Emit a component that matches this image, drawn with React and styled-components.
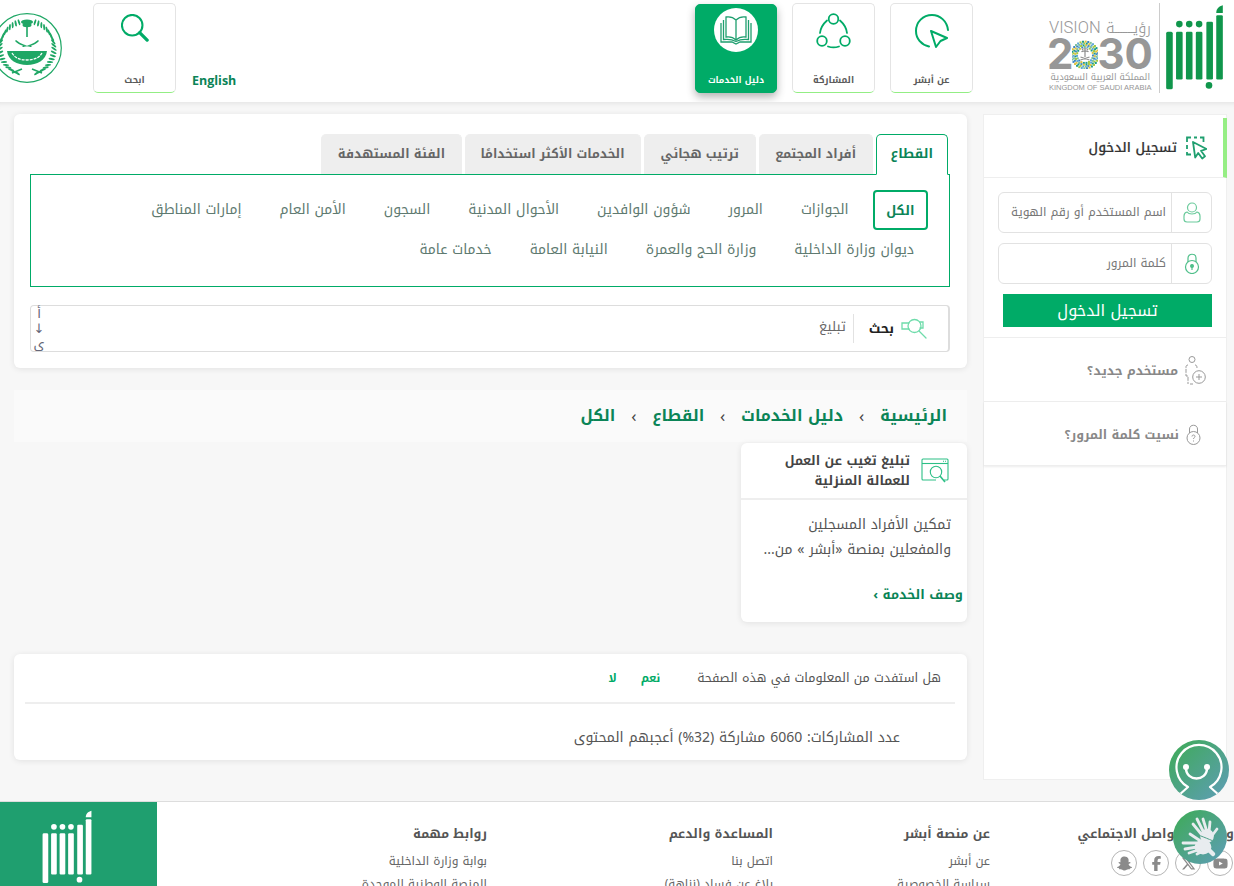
import React from "react";
import styled, { createGlobalStyle } from "styled-components";
import { FaFacebookF, FaXTwitter, FaYoutube } from "react-icons/fa6";
import { FaSnapchatGhost } from "react-icons/fa";

const GREEN = "#00ab67";
const TEXT_GREEN = "#0b8457";
const KUFI = `"Noto Kufi Arabic", "DejaVu Sans", sans-serif`;

const GlobalStyle = createGlobalStyle`
  html, body {
    margin: 0;
    height: 100%;
    overflow: hidden;
    background: #fff;
    font-family: ${KUFI};
  }
  * { box-sizing: border-box; }
`;

const Page = styled.div`
  width: 1234px;
  height: 886px;
  overflow: hidden;
  position: relative;
  color: #444;
`;

/* header */
const Header = styled.header`
  height: 102px;
  display: flex;
  align-items: flex-start;
  padding-right: 10px;
  background: #fff;
  overflow: hidden;
`;

const LogoBox = styled.div`
  display: flex;
  align-items: flex-start;
  margin-left: 73px;
`;

const MainLogo = styled.svg`
  width: 59px;
  height: 85px;
  margin-top: 5px;
  display: block;
`;

const LogoDivider = styled.div`
  width: 1px;
  height: 90px;
  margin: 3px 5px 0 5px;
  background: #ccc;
`;

const Vision = styled.div`
  width: 108px;
  padding-top: 18px;
  direction: ltr;
  color: #979797;
`;

const VisionTop = styled.div`
  display: flex;
  justify-content: space-between;
  align-items: center;
  height: 20px;
  font: 300 16.5px/20px Roboto, sans-serif;
  padding: 0 3px 0 3px;
`;

const VisionArabic = styled.span`
  font: 300 15px/20px ${KUFI};
`;

const VisionYear = styled.div`
  display: flex;
  align-items: center;
  height: 31px;
  padding-left: 1px;
  font: 700 42px/31px Inter, sans-serif;
`;

const VisionCaption = styled.div`
  margin-top: 3px;
  font: 9px/11px ${KUFI};
  white-space: nowrap;
  text-align: right;
  padding: 0 4px 0 2px;
`;

const VisionLatin = styled.div`
  font: 7.5px/9px "Liberation Sans", sans-serif;
  white-space: nowrap;
  padding-left: 3px;
`;

const NavCards = styled.nav`
  display: flex;
  gap: 15px;
  padding-top: 3px;
`;

const NavCard = styled.div`
  width: ${(p) => (p.$active ? "82px" : "83px")};
  height: ${(p) => (p.$active ? "89px" : "90px")};
  margin-top: ${(p) => (p.$active ? "1px" : "0")};
  display: flex;
  flex-direction: column;
  align-items: center;
  border: 1px solid ${(p) => (p.$active ? GREEN : "#e4e4e4")};
  border-bottom-color: ${(p) => (p.$active ? GREEN : "#93ee84")};
  border-radius: 5px;
  background: ${(p) => (p.$active ? GREEN : "#fff")};
  box-shadow: ${(p) => (p.$active ? "0 4px 8px rgba(0,0,0,.3)" : "none")};
  color: ${(p) => (p.$active ? "#fff" : "#5a5a5a")};
`;

const NavIconWrap = styled.div`
  height: 61px;
  display: flex;
  align-items: flex-start;
  justify-content: center;
  padding-top: ${(p) => (p.$active ? "3px" : "10px")};
`;

const BookCircle = styled.div`
  width: 44px;
  height: 44px;
  border-radius: 50%;
  background: #fff;
  display: flex;
  align-items: center;
  justify-content: center;
`;

const NavLabel = styled.div`
  font-size: ${(p) => (p.$small ? "8.8px" : "9.2px")};
  font-weight: 700;
  line-height: 24px;
  padding-top: 3px;
  white-space: nowrap;
`;

const LeftTools = styled.div`
  margin-right: auto;
  display: flex;
  align-items: flex-start;
`;

const English = styled.a`
  font: 700 12.5px/16px "Open Sans", sans-serif;
  color: ${TEXT_GREEN};
  margin: 73px 0 0 16px;
`;

const SearchCard = styled(NavCard)`
  margin-top: 3px;
  margin-left: 31px;
`;

const Emblem = styled.svg`
  width: 70px;
  height: 70px;
  margin: 13px 0 0 -8px;
  flex-shrink: 0;
`;

/* body */
const Main = styled.main`
  height: 700px;
  display: flex;
  gap: 16px;
  padding: 12px 7px 21px 14px;
  background: #f7f7f7;
  box-shadow: inset 0 6px 6px -6px rgba(0, 0, 0, 0.12);
  border-bottom: 1px solid #ddd;
`;

const Sidebar = styled.aside`
  width: 244px;
  flex-shrink: 0;
  background: #fff;
  border: 1px solid #efefef;
  display: flex;
  flex-direction: column;
`;

const LoginHead = styled.div`
  height: 60px;
  display: flex;
  align-items: center;
  gap: 9px;
  padding: 0 16px 0 0;
  border-bottom: 1px solid #eee;
  border-right: 4px solid #96ee84;
  margin-top: 3px;
  margin-right: -1px;
`;

const LoginTitle = styled.div`
  font-size: 13.5px;
  font-weight: 500;
  line-height: 24px;
  color: #333;
  -webkit-text-stroke: 0.2px #333;
`;

const LoginForm = styled.div`
  display: flex;
  flex-direction: column;
  gap: 10px;
  padding: 14px 14px 10px 14px;
  border-bottom: 1px solid #eee;
`;

const Field = styled.div`
  height: 41px;
  display: flex;
  border: 1px solid #e2e2e2;
  border-radius: 6px;
  background: #fff;
`;

const FieldIcon = styled.div`
  width: 40px;
  display: flex;
  align-items: center;
  justify-content: center;
  border-left: 1px solid #e2e2e2;
`;

const FieldText = styled.div`
  flex: 1;
  padding-right: 5px;
  font-size: 12px;
  line-height: 39px;
  color: #777;
  white-space: nowrap;
`;

const LoginButton = styled.div`
  height: 33px;
  margin-left: 5px;
  background: ${GREEN};
  color: #fff;
  font-size: 16px;
  line-height: 33px;
  text-align: center;
`;

const SideLink = styled.div`
  height: 64px;
  display: flex;
  align-items: center;
  gap: 7px;
  padding-right: ${(p) => p.$pad}px;
  padding-top: 2px;
  border-bottom: 1px solid #eee;
  box-shadow: ${(p) => (p.$last ? "0 1px 2px rgba(0,0,0,.08)" : "none")};
  font-size: 12.5px;
  font-weight: 700;
  line-height: 24px;
  color: #888;
`;

const Content = styled.div`
  flex: 1;
  min-width: 0;
  display: flex;
  flex-direction: column;
`;

const Card = styled.section`
  background: #fff;
  border-radius: 6px;
  box-shadow: 0 1px 6px rgba(0, 0, 0, 0.09);
`;

const FilterCard = styled(Card)`
  height: 254px;
  padding: 20px 17px 0 16px;
`;

const Tabs = styled.div`
  display: flex;
  gap: 3px;
  height: 40px;
  padding-right: 2px;
`;

const Tab = styled.div`
  padding: 0 ${(p) => p.$pad}px;
  line-height: 38px;
  font-size: ${(p) => (p.$active ? "13px" : "12.5px")};
  font-weight: 700;
  white-space: nowrap;
  border: 1px solid ${(p) => (p.$active ? GREEN : "#eee")};
  border-bottom: ${(p) => (p.$active ? "1px solid #fff" : "none")};
  border-radius: 5px 5px 0 0;
  background: ${(p) => (p.$active ? "#fff" : "#eee")};
  color: ${(p) => (p.$active ? TEXT_GREEN : "#666")};
  position: relative;
  z-index: 1;
  margin-bottom: ${(p) => (p.$active ? "-1px" : "0")};
  height: ${(p) => (p.$active ? "41px" : "40px")};
`;

const TabPanel = styled.div`
  height: 113px;
  border: 1px solid ${GREEN};
  padding: 15px 21px 0 0;
`;

const FilterRow = styled.div`
  display: flex;
  gap: 10px;
  height: 40px;
`;

const Filter = styled.div`
  height: 40px;
  padding: 0 ${(p) => (p.$active ? "11.5px" : "14px")};
  line-height: ${(p) => (p.$active ? "37px" : "40px")};
  font-size: ${(p) => (p.$active ? "13px" : "14px")};
  white-space: nowrap;
  border-radius: 4px;
  color: ${(p) => (p.$active ? TEXT_GREEN : "#5e7a70")};
  font-weight: ${(p) => (p.$active ? 700 : 400)};
  border: ${(p) => (p.$active ? `2px solid ${GREEN}` : "0")};
`;

const SearchBar = styled.div`
  height: 47px;
  margin-top: 18px;
  display: flex;
  align-items: center;
  padding: 0 20px 0 0;
  border: 1px solid #ddd;
  border-right: 2px solid #ddd;
  border-radius: 4px;
`;

const SearchLabel = styled.div`
  font-size: 13.5px;
  font-weight: 700;
  color: #222;
  margin-right: 7px;
  padding-left: 15px;
  border-left: 1px solid #e2e2e2;
  line-height: 28px;
  padding-top: 1px;
`;

const SearchValue = styled.div`
  font-size: 13px;
  line-height: 24px;
  color: #666;
  margin-right: 7px;
  margin-top: -4px;
`;

const SortArrows = styled.div`
  margin-right: auto;
  width: 12px;
  margin-left: 2px;
  height: 45px;
  display: flex;
  flex-direction: column;
  justify-content: space-between;
  align-items: center;
  font-size: 13px;
  line-height: 15px;
  color: #667;
`;

const Breadcrumb = styled.div`
  height: 52px;
  margin-top: 22px;
  display: flex;
  align-items: center;
  padding: 0 20px 0 0;
  gap: 15.7px;
  background: #fafafa;
  font-size: 16px;
  font-weight: 700;
  line-height: 30px;
  color: ${TEXT_GREEN};
`;

const Crumb = styled.span`
  white-space: nowrap;
`;

const CrumbSep = styled.span`
  font-size: 17px;
  font-weight: 400;
  color: #444;
`;

const ServiceCard = styled(Card)`
  width: 226px;
  height: 179px;
  margin-top: 1px;
`;

const ServiceHead = styled.div`
  height: 57px;
  display: flex;
  align-items: center;
  gap: 11px;
  padding-right: 18px;
  border-bottom: 2px solid #eee;
`;

const ServiceTitle = styled.div`
  width: 140px;
  font-size: 12.8px;
  font-weight: 700;
  line-height: 20px;
  color: #444;
`;

const ServiceBody = styled.div`
  padding: 12px 16px 0 0;
  font-size: 14px;
  line-height: 25px;
  color: #555;
  white-space: nowrap;
`;

const ServiceLink = styled.div`
  margin: 23px 4px 0 0;
  font-size: 13px;
  font-weight: 700;
  line-height: 20px;
  color: ${TEXT_GREEN};
`;

const FeedbackCard = styled(Card)`
  height: 106px;
  margin-top: 32px;
  padding: 0 12px 0 11px;
`;

const FeedbackRow = styled.div`
  height: 50px;
  display: flex;
  align-items: center;
  padding-bottom: 1px;
  padding-right: 14px;
  border-bottom: 2px solid #eee;
  font-size: 12.6px;
  line-height: 24px;
  color: #555;
`;

const Answer = styled.span`
  font-size: 11.5px;
  font-weight: 700;
  color: ${GREEN};
  margin-right: ${(p) => p.$gap}px;
`;

const Stats = styled.div`
  padding: 25px 55px 0 0;
  font-size: 14px;
  line-height: 18px;
  color: #555;
`;

/* footer */
const Footer = styled.footer`
  height: 84px;
  display: flex;
  flex-direction: row-reverse;
  background: #fff;
  overflow: hidden;
`;

const FooterBrand = styled.div`
  width: 157px;
  height: 100%;
  background: #1f9f6f;
  padding: 7px 0 0 42px;
  flex-shrink: 0;
  direction: ltr;
`;

const FooterLogo = styled.svg`
  width: 50px;
  height: 76px;
  display: block;
`;

const FooterCols = styled.div`
  flex: 1;
  display: flex;
  padding-top: 22px;
`;

const FooterCol = styled.div`
  width: ${(p) => p.$width}px;
  flex-shrink: 0;
  white-space: nowrap;
`;

const FooterTitle = styled.div`
  font-size: 12.6px;
  font-weight: 700;
  line-height: 20px;
  color: #555;
  margin-bottom: 6px;
`;

const FooterLink = styled.div`
  font-size: 12px;
  line-height: 23px;
  color: #666;
`;

const Socials = styled.div`
  display: flex;
  gap: 6px;
  margin: 5px 1px 0 0;
`;

const SocialDot = styled.div`
  width: 26px;
  height: 26px;
  border: 1px solid #b5b5b5;
  border-radius: 50%;
  display: flex;
  align-items: center;
  justify-content: center;
  color: #8a8a8a;
  font-size: 15px;
`;

const FloatBtn = styled.div`
  position: absolute;
  left: ${(p) => p.$x}px;
  top: ${(p) => p.$y}px;
  width: ${(p) => p.$size}px;
  height: ${(p) => p.$size}px;
  border-radius: 50%;
  background: linear-gradient(135deg, #3dab55, #5f9db8);
  overflow: hidden;
`;

const RingSvg = styled.svg`
  flex-shrink: 0;
  margin: 0 -1px;
`;

const ShareSvg = styled.svg`
  margin-top: -1px;
`;

function AbsherMark({ as: Comp, color }) {
  return (
    <Comp viewBox="46 14 176 258" fill={color}>
      <rect x="48" y="95" width="20" height="175" rx="5" />
      <rect x="78" y="95" width="20" height="145" rx="4" />
      <rect x="108" y="95" width="20" height="145" rx="4" />
      <rect x="138" y="95" width="20" height="145" rx="4" />
      <rect x="170" y="65" width="20" height="175" rx="4" />
      <rect x="200" y="45" width="20" height="195" rx="4" />
      <path d="M200 38c0-12 8-20 20-23v23z" />
      <circle cx="88" cy="72" r="10" />
      <circle cx="118" cy="72" r="10" />
      <circle cx="148" cy="72" r="10" />
      <circle cx="178" cy="258" r="10" />
    </Comp>
  );
}

function VisionRing() {
  const colors = ["#5fa9d6", "#a4c93f", "#1f9d8a", "#e2c23c", "#3f86c0", "#7cc09a"];
  const dots = [];
  for (let r = 8; r <= 13.5; r += 1.8) {
    const n = Math.round(r * 2.4);
    for (let i = 0; i < n; i++) {
      const a = (i / n) * Math.PI * 2 + r;
      dots.push(
        <rect
          key={r + "-" + i}
          x={12 + r * Math.cos(a)}
          y={15 + r * Math.sin(a)}
          width="2"
          height="2"
          fill={colors[(i + Math.round(r)) % 6]}
        />
      );
    }
  }
  return (
    <RingSvg width="26" height="30" viewBox="0 0 26 30">
      {dots}
      <path d="M13 9v9M10 11c1-2 5-2 6 0M9.500 13c1-1.500 6-1.500 7 0M8.500 21l9-3M17.500 21l-9-3" stroke="#8e8e8e" strokeWidth="1.200" fill="none" />
    </RingSvg>
  );
}

function AboutIcon() {
  return (
    <svg width="34" height="34" viewBox="0 0 34 34" fill="none" stroke={GREEN} strokeWidth="2">
      <path d="M14 32.500C6 30.500 1 24.500 1 17 1 8 8 1 17 1c8 0 15 6 16 15" strokeLinecap="round" />
      <path d="M16 17l16 7-6.500 3-4.500 6z" strokeLinejoin="round" />
    </svg>
  );
}

function ShareIcon() {
  return (
    <ShareSvg width="35" height="36" viewBox="0 0 35 36" fill="none" stroke={GREEN} strokeWidth="1.800">
      <circle cx="17.500" cy="6" r="4.800" />
      <circle cx="6" cy="28" r="4.800" />
      <circle cx="29" cy="28" r="4.800" />
      <path d="M11 7.500C7 11 4.500 15.500 4 20M24 7.500c4 3.500 6.500 8 7 12.500M12 33.500c3.500 1.200 7.500 1.200 11 0" strokeLinecap="round" />
    </ShareSvg>
  );
}

function BookIcon() {
  return (
    <svg width="32" height="30" viewBox="0 0 32 30" fill="none" stroke="#1f9f6f" strokeWidth="1.300">
      <path d="M16 5C13 2 9 1.500 6 2v20c3-.5 7 0 10 3 3-3 7-3.500 10-3V2c-3-.5-7 0-10 3zM16 5v20" />
      <path d="M3.500 5v19.500c4-.5 9 0 12.500 2 3.500-2 8.500-2.500 12.500-2V5M1 8v19h11l4 2 4-2h11V8" />
    </svg>
  );
}

function SearchGlass() {
  return (
    <svg width="28" height="28" viewBox="0 0 30 30" fill="none" stroke={GREEN}>
      <circle cx="12" cy="12" r="11" strokeWidth="2.200" />
      <path d="M20 20l8 8" strokeWidth="3.500" strokeLinecap="round" />
    </svg>
  );
}

function LoginCursor() {
  return (
    <svg width="21" height="24" viewBox="0 0 21 24" fill="none" stroke="#1f9f6f" strokeWidth="1.800">
      <path d="M1 6V1.500h4M8 1.500h3M14 1.500h3.500V6M1 9v4M1 16v2.500h4" />
      <path d="M7 6l13.500 7-5.500 1.800 4 5.500-2.800 2.200-4-5.500-3 4.500z" strokeLinejoin="round" fill="#fff" />
    </svg>
  );
}

function UserIcon() {
  return (
    <svg width="18" height="21" viewBox="0 0 18 21" fill="none" stroke="#6dcb9d" strokeWidth="1.200">
      <circle cx="9" cy="5.500" r="4.500" />
      <path d="M4 10c-2 .5-3 2-3 4v3c0 2 1 3 3 3h10c2 0 3-1 3-3v-3c0-2-1-3.500-3-4-1 1.500-3 2-5 2s-4-.5-5-2z" />
    </svg>
  );
}

function LockIcon() {
  return (
    <svg width="16" height="21" viewBox="0 0 16 21" fill="none" stroke="#4fbf8a" strokeWidth="1.200">
      <path d="M4 9V5c0-5 8-5 8 0v4" />
      <circle cx="8" cy="14" r="6.500" />
      <circle cx="8" cy="13" r="1.400" fill="#4fbf8a" />
      <path d="M8 14v3" />
    </svg>
  );
}

function NewUserIcon() {
  return (
    <svg width="21" height="30" viewBox="0 0 21 30" fill="none" stroke="#999" strokeWidth="1">
      <circle cx="7" cy="3.500" r="3" />
      <path d="M3 9c-1.500 0-2 1-2 2v9h2v8M8 28H5M10 9c1.500 0 2 1 2 3" strokeDasharray="4 1" />
      <circle cx="14" cy="21" r="6.300" />
      <path d="M14 18v6M11 21h6" />
    </svg>
  );
}

function ForgotIcon() {
  return (
    <svg width="15" height="21" viewBox="0 0 15 21" fill="none" stroke="#999" strokeWidth="1">
      <path d="M3.500 9V5c0-5 8-5 8 0v4" />
      <circle cx="7.500" cy="14" r="6.500" />
      <path d="M6 12.500c0-2 3-2 3 0 0 1-1.500 1-1.500 2.500M7.500 16.500v1" />
    </svg>
  );
}

function KeySearchIcon() {
  return (
    <svg width="27" height="21" viewBox="0 0 27 21" fill="none" stroke="#6fdcab" strokeWidth="1.300">
      <circle cx="13.500" cy="8" r="6.500" />
      <path d="M18 13l7 7M8 5H1v6h7M19 4h3v6h-3" strokeLinecap="round" />
    </svg>
  );
}

function ServiceIcon() {
  return (
    <svg width="28" height="26" viewBox="0 0 28 26" fill="none" stroke="#2cbf86" strokeWidth="1.100">
      <path d="M23 22h3c1 0 1-.5 1-1V2c0-.5-.5-1-1-1H2c-.5 0-1 .5-1 1v19c0 .5.5 1 1 1h13" />
      <path d="M1 5.500h26" />
      <circle cx="15" cy="14" r="5.700" />
      <path d="M19 18l5 6" strokeWidth="1.600" />
      <path d="M22 3.300h1M24 3.300h1" />
    </svg>
  );
}

function EmblemArt() {
  const leaves = [];
  for (let i = 0; i < 20; i++) {
    const a = (i / 20) * 2.6 + 0.3;
    const x1 = 35 - 27 * Math.sin(a);
    const y1 = 35 - 27 * Math.cos(a);
    const deg = (a * 180) / Math.PI - 35;
    leaves.push(<ellipse key={"l" + i} cx={x1} cy={y1} rx="1" ry="3.200" transform={`rotate(${deg} ${x1} ${y1})`} />);
    const x2 = 70 - x1;
    leaves.push(<ellipse key={"r" + i} cx={x2} cy={y1} rx="1" ry="3.200" transform={`rotate(${-deg} ${x2} ${y1})`} />);
  }
  return (
    <Emblem viewBox="0 0 70 70">
      <circle cx="35" cy="35" r="34.300" fill="none" stroke="#1fa765" strokeWidth="1.200" />
      <g fill="#1fa765">
        {leaves}
        <rect x="34.200" y="10" width="1.600" height="14" />
        <ellipse cx="35" cy="9" rx="6" ry="2.600" />
        <ellipse cx="35" cy="12" rx="4.500" ry="2.200" />
        <path d="M24 27c5 4 10 6 16 6l-1 1c-6 0-12-2-16-6zM46 27c-5 4-10 6-16 6l1 1c6 0 12-2 16-6z" />
        <path d="M15 38h40c-1 9-10 14-20 14s-19-5-20-14z" />
      </g>
      <path d="M20 40c3 5 8 7 15 7s12-2 15-7" fill="none" stroke="#fff" strokeWidth="1.300" strokeDasharray="3 1" />
      <path d="M20 60l10-4M50 60l-10-4" stroke="#1fa765" strokeWidth="1.600" />
    </Emblem>
  );
}

const filterRows = [
  ["الكل", "الجوازات", "المرور", "شؤون الوافدين", "الأحوال المدنية", "السجون", "الأمن العام", "إمارات المناطق"],
  ["ديوان وزارة الداخلية", "وزارة الحج والعمرة", "النيابة العامة", "خدمات عامة"],
];

const tabs = [
  ["القطاع", 14],
  ["أفراد المجتمع", 15.5],
  ["ترتيب هجائي", 16],
  ["الخدمات الأكثر استخدامًا", 15],
  ["الفئة المستهدفة", 15.5],
];

export default function App() {
  return (
    <Page dir="rtl">
      <GlobalStyle />
      <Header>
        <LogoBox>
          <AbsherMark as={MainLogo} color="#10964c" />
          <LogoDivider />
          <Vision>
            <VisionTop>
              <span>VISION</span>
              <VisionArabic>رؤيـــــــة</VisionArabic>
            </VisionTop>
            <VisionYear>
              2<VisionRing />30
            </VisionYear>
            <VisionCaption>المملكة العربية السعودية</VisionCaption>
            <VisionLatin>KINGDOM OF SAUDI ARABIA</VisionLatin>
          </Vision>
        </LogoBox>
        <NavCards>
          <NavCard>
            <NavIconWrap><AboutIcon /></NavIconWrap>
            <NavLabel>عن أبشر</NavLabel>
          </NavCard>
          <NavCard>
            <NavIconWrap><ShareIcon /></NavIconWrap>
            <NavLabel>المشاركة</NavLabel>
          </NavCard>
          <NavCard $active>
            <NavIconWrap $active>
              <BookCircle><BookIcon /></BookCircle>
            </NavIconWrap>
            <NavLabel $small>دليل الخدمات</NavLabel>
          </NavCard>
        </NavCards>
        <LeftTools>
          <English dir="ltr">English</English>
          <SearchCard>
            <NavIconWrap><SearchGlass /></NavIconWrap>
            <NavLabel>ابحث</NavLabel>
          </SearchCard>
          <EmblemArt />
        </LeftTools>
      </Header>

      <Main>
        <Sidebar>
          <LoginHead>
            <LoginCursor />
            <LoginTitle>تسجيل الدخول</LoginTitle>
          </LoginHead>
          <LoginForm>
            <Field>
              <FieldIcon><UserIcon /></FieldIcon>
              <FieldText>اسم المستخدم أو رقم الهوية</FieldText>
            </Field>
            <Field>
              <FieldIcon><LockIcon /></FieldIcon>
              <FieldText>كلمة المرور</FieldText>
            </Field>
            <LoginButton>تسجيل الدخول</LoginButton>
          </LoginForm>
          <SideLink $pad={20}>
            <NewUserIcon />
            مستخدم جديد؟
          </SideLink>
          <SideLink $pad={25} $last>
            <ForgotIcon />
            نسيت كلمة المرور؟
          </SideLink>
        </Sidebar>

        <Content>
          <FilterCard>
            <Tabs>
              {tabs.map(([label, pad], i) => (
                <Tab key={label} $pad={pad} $active={i === 0}>{label}</Tab>
              ))}
            </Tabs>
            <TabPanel>
              {filterRows.map((row, r) => (
                <FilterRow key={r}>
                  {row.map((f) => (
                    <Filter key={f} $active={f === "الكل"}>{f}</Filter>
                  ))}
                </FilterRow>
              ))}
            </TabPanel>
            <SearchBar>
              <KeySearchIcon />
              <SearchLabel>بحث</SearchLabel>
              <SearchValue>تبليغ</SearchValue>
              <SortArrows>
                <span>أ</span>
                <span>↓</span>
                <span>ى</span>
              </SortArrows>
            </SearchBar>
          </FilterCard>

          <Breadcrumb>
            <Crumb>الرئيسية</Crumb>
            <CrumbSep>›</CrumbSep>
            <Crumb>دليل الخدمات</Crumb>
            <CrumbSep>›</CrumbSep>
            <Crumb>القطاع</Crumb>
            <CrumbSep>›</CrumbSep>
            <Crumb>الكل</Crumb>
          </Breadcrumb>

          <ServiceCard>
            <ServiceHead>
              <ServiceIcon />
              <ServiceTitle>تبليغ تغيب عن العمل للعمالة المنزلية</ServiceTitle>
            </ServiceHead>
            <ServiceBody>
              تمكين الأفراد المسجلين
              <br />
              والمفعلين بمنصة «أبشر » من...
            </ServiceBody>
            <ServiceLink>وصف الخدمة ›</ServiceLink>
          </ServiceCard>

          <FeedbackCard>
            <FeedbackRow>
              هل استفدت من المعلومات في هذه الصفحة
              <Answer $gap={37}>نعم</Answer>
              <Answer $gap={24}>لا</Answer>
            </FeedbackRow>
            <Stats>عدد المشاركات: 6060 مشاركة (32%) أعجبهم المحتوى</Stats>
          </FeedbackCard>
        </Content>
      </Main>

      <Footer>
        <FooterBrand>
          <AbsherMark as={FooterLogo} color="#fff" />
        </FooterBrand>
        <FooterCols>
          <FooterCol $width={244}>
            <FooterTitle>وسائل التواصل الاجتماعي</FooterTitle>
            <Socials>
              <SocialDot><FaYoutube /></SocialDot>
              <SocialDot><FaXTwitter /></SocialDot>
              <SocialDot><FaFacebookF /></SocialDot>
              <SocialDot><FaSnapchatGhost /></SocialDot>
            </Socials>
          </FooterCol>
          <FooterCol $width={217}>
            <FooterTitle>عن منصة أبشر</FooterTitle>
            <FooterLink>عن أبشر</FooterLink>
            <FooterLink>سياسة الخصوصية</FooterLink>
          </FooterCol>
          <FooterCol $width={286}>
            <FooterTitle>المساعدة والدعم</FooterTitle>
            <FooterLink>اتصل بنا</FooterLink>
            <FooterLink>بلاغ عن فساد (نزاهة)</FooterLink>
          </FooterCol>
          <FooterCol $width={200}>
            <FooterTitle>روابط مهمة</FooterTitle>
            <FooterLink>بوابة وزارة الداخلية</FooterLink>
            <FooterLink>المنصة الوطنية الموحدة</FooterLink>
          </FooterCol>
        </FooterCols>
      </Footer>

      <FloatBtn $x={1169} $y={740} $size={60}>
        <svg width="60" height="60" viewBox="0 0 60 60" fill="none" stroke="#fff" strokeWidth="2.200">
          <path d="M9 56l10-9a22.500 22.500 0 1 1 22 0l10 9" strokeLinejoin="round" />
          <path d="M17 28c0 14 21 14 21 0" strokeWidth="2.400" />
          <circle cx="17" cy="27" r="3" fill="#fff" stroke="none" />
          <circle cx="38" cy="27" r="3" fill="#fff" stroke="none" />
        </svg>
      </FloatBtn>
      <FloatBtn $x={1173} $y={810} $size={54}>
        <svg width="54" height="54" viewBox="0 0 54 54" fill="none" stroke="#e8ecef" strokeWidth="2.800" strokeLinecap="round">
          <path d="M29 25l-9-11M31 23l-7-14M34 22l-4-13M36 22l1-10M38 27l6-8" />
          <circle cx="34" cy="26" r="5.500" fill="#e8ecef" />
          <path d="M17 22.500c5 1 15 5 22 8" stroke="#4f9f88" strokeWidth="1" />
          <path d="M24 33H10M24 37l-12 2M25 40l-9 3M28 42l-4 2M29 32l-12-8" />
          <ellipse cx="30" cy="37" rx="7" ry="6" fill="#e8ecef" />
          <path d="M36 40l4 4" strokeWidth="4.500" />
        </svg>
      </FloatBtn>
    </Page>
  );
}
